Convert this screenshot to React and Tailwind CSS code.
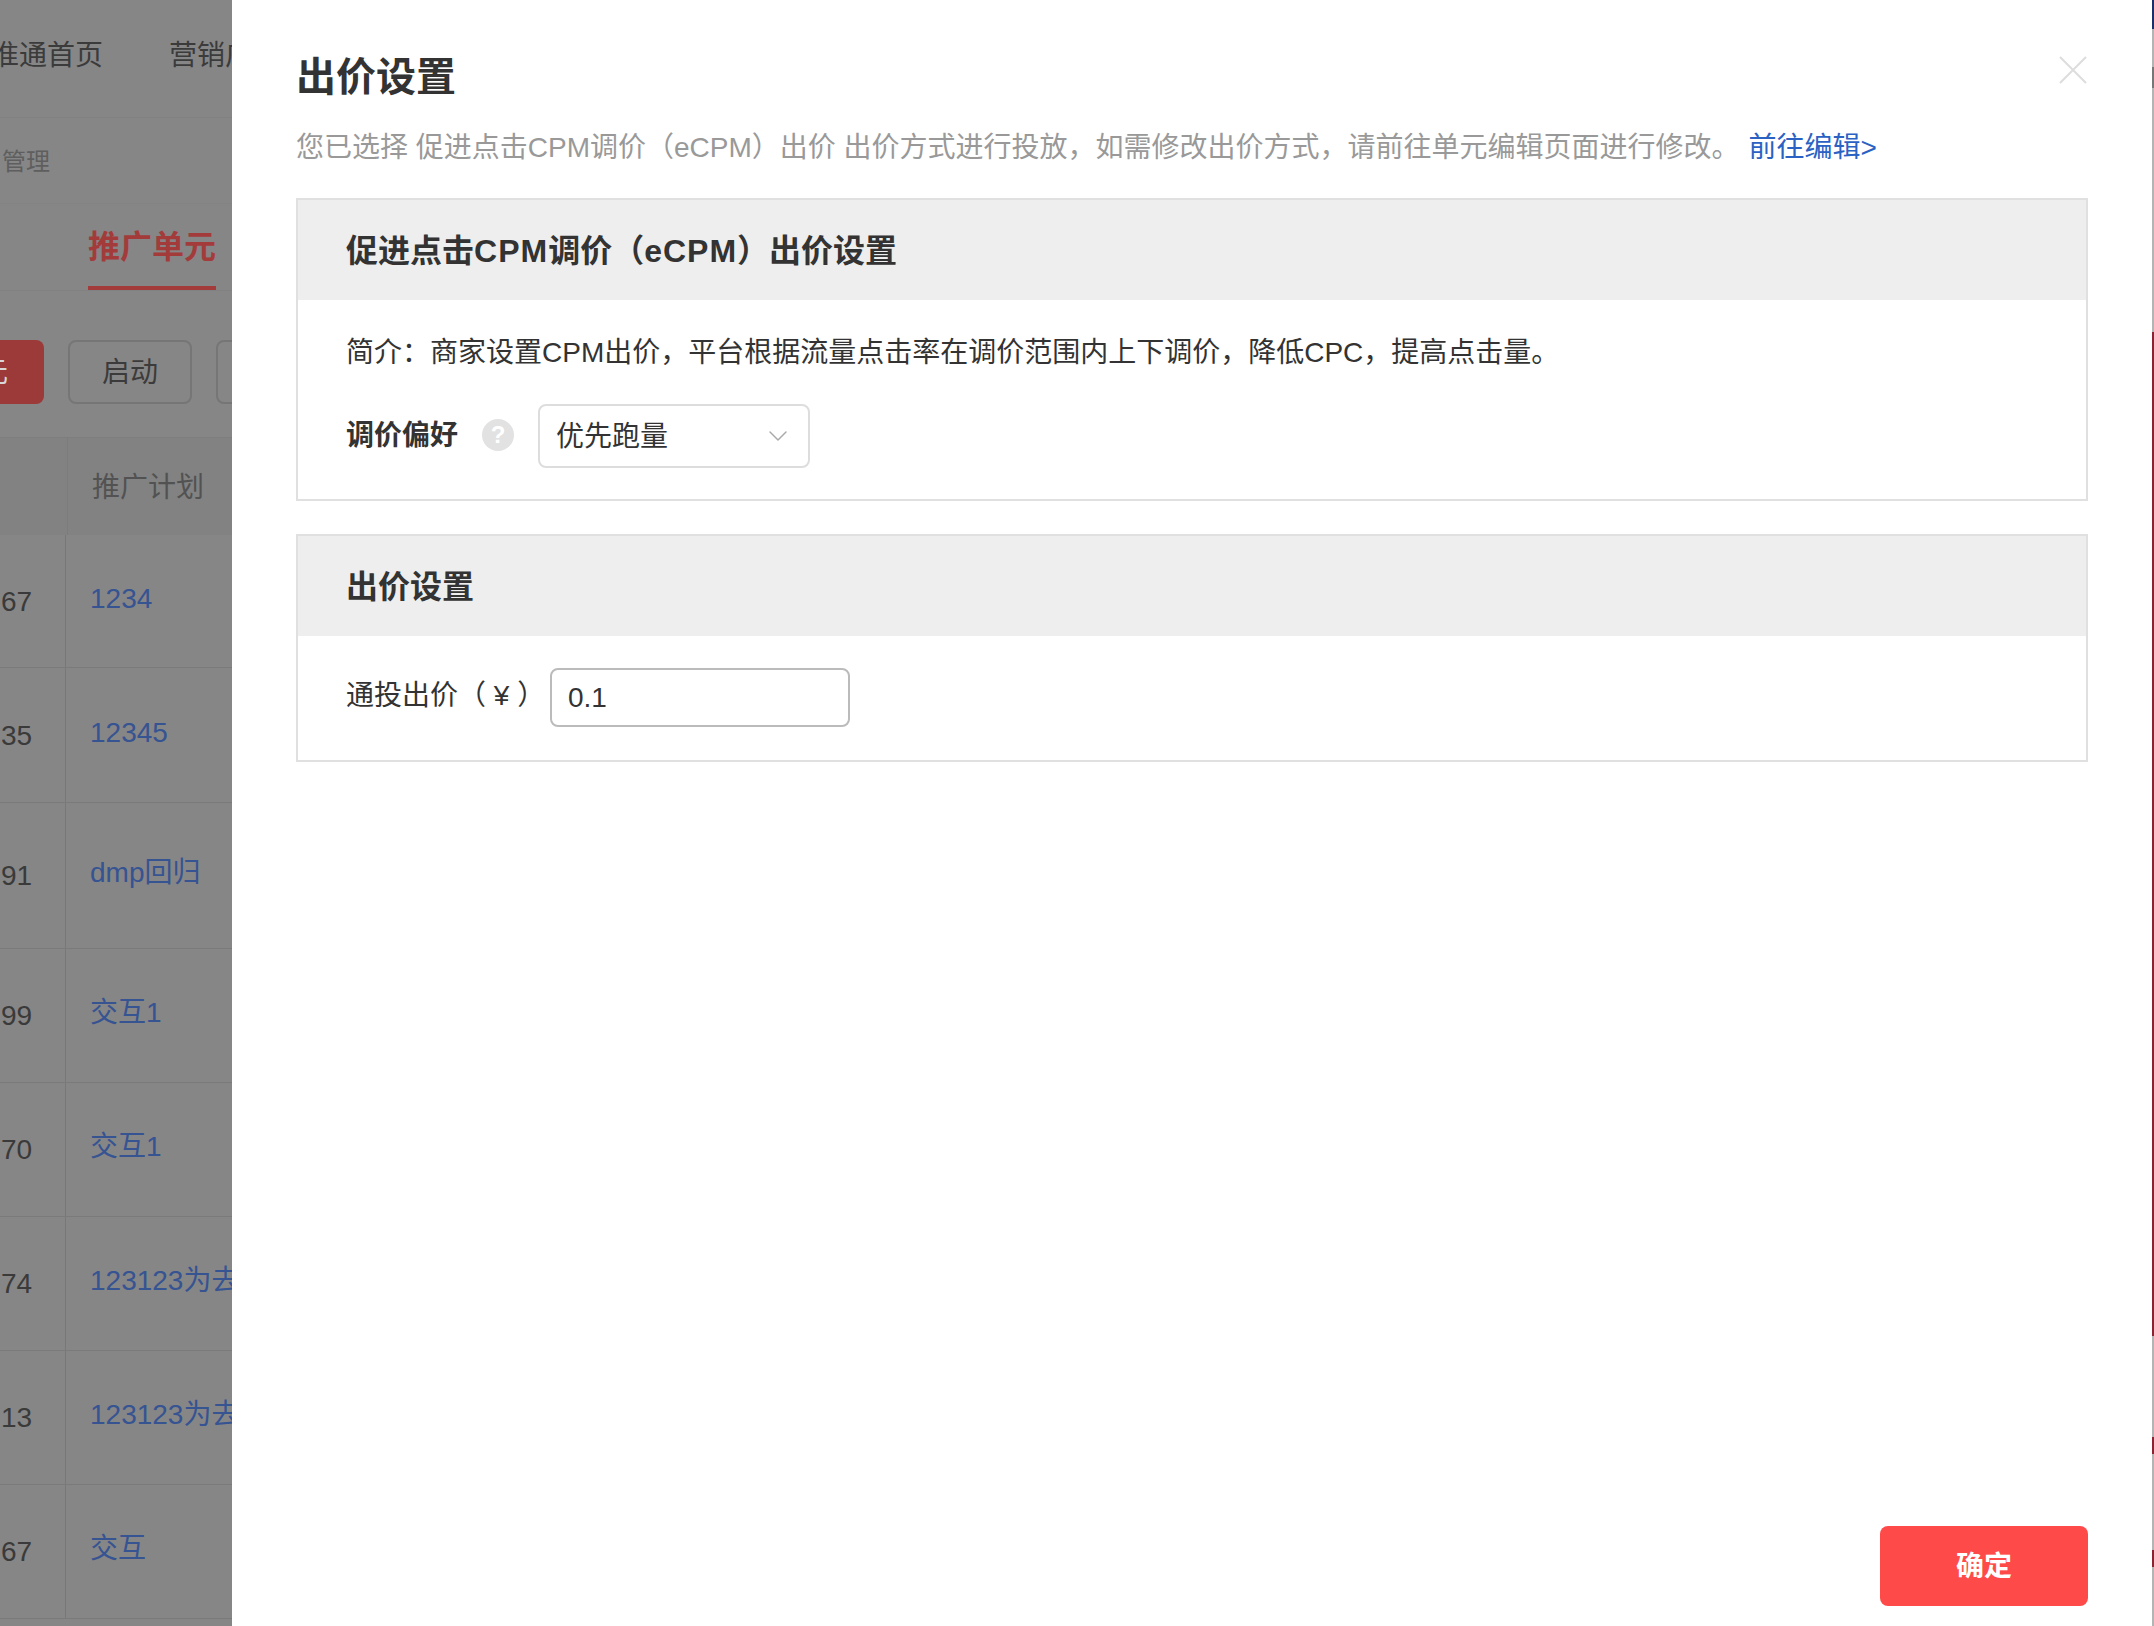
import { ChevronDown } from 'lucide-react';

const rows = [
    { id: '67', name: '1234', h: 'h-[133px]' },
    { id: '35', name: '12345', h: 'h-[135px]' },
    { id: '91', name: 'dmp回归', h: 'h-[146px]' },
    { id: '99', name: '交互1', h: 'h-[134px]' },
    { id: '70', name: '交互1', h: 'h-[134px]' },
    { id: '74', name: '123123为去重', h: 'h-[134px]' },
    { id: '13', name: '123123为去重', h: 'h-[134px]' },
    { id: '67', name: '交互', h: 'h-[134px]' },
];

function BackgroundPage() {
    return (
        <div className="w-[232px] h-full shrink-0 overflow-hidden bg-[#868686] whitespace-nowrap">
            <div className="h-[118px] flex items-center -ml-[9px] pb-[5px] text-[28px] text-[#3b3b3b] border-b border-[#818181]">
                <span>准通首页</span>
                <span className="ml-[66px]">营销广告</span>
            </div>
            <div className="h-[86px] flex items-center pl-[2px] pt-[2px] text-[24px] text-[#5e5e5e] border-b border-[#838383]">管理</div>
            <div className="h-[87px] pl-[88px] border-b border-[#818181]">
                <div className="w-[128px] h-[86px] pt-[19px] text-center text-[32px] leading-[48px] font-bold text-[#a33b3b] border-b-[4px] border-[#a33b3b]">推广单元</div>
            </div>
            <div className="h-[146px] flex items-start pt-[49px] gap-[24px]">
                <div className="w-[44px] h-[64px] shrink-0 flex justify-end pr-[36px] rounded-r-[8px] bg-[#9c3a3a] text-[28px] leading-[66px] text-[#d8d8d8] overflow-hidden">元</div>
                <div className="w-[124px] h-[64px] shrink-0 rounded-[8px] border-2 border-[#767676] text-center text-[28px] leading-[62px] text-[#3b3b3b]">启动</div>
                <div className="w-[60px] h-[64px] shrink-0 rounded-[8px] border-2 border-[#767676]"></div>
            </div>
            <div className="h-[98px] flex bg-[#828282] border-t border-[#7d7d7d]">
                <div className="w-[68px] h-full shrink-0 border-r border-[#7c7c7c]"></div>
                <div className="pl-[24px] pt-[30px] text-[28px] leading-[40px] text-[#525252]">推广计划</div>
            </div>
            {rows.map((row, i) => (
                <div key={i} className={`${row.h} flex border-b border-[#7a7a7a]`}>
                    <div className="w-[66px] shrink-0 flex items-center pl-[1px] pt-[1px] text-[28px] text-[#3a3a3a] border-r border-[#787878]">{row.id}</div>
                    <div className="flex items-center pl-[24px] pb-[5px] text-[28px] text-[#365392]">{row.name}</div>
                </div>
            ))}
        </div>
    );
}

function SectionBox({ title, children }) {
    return (
        <div className="border-2 border-[#e0e0e0]">
            <div className="h-[100px] flex items-center pl-[48px] pt-[2px] bg-[#eeeeee] text-[32px] font-bold text-[#333333]">
                <span>{title}</span>
            </div>
            {children}
        </div>
    );
}

function Drawer() {
    return (
        <div className="flex-1 h-full flex flex-col bg-white pl-[64px] pr-[64px] pt-[49px] pb-[20px]">
            <div className="flex items-center justify-between h-[56px]">
                <h2 className="text-[40px] leading-[56px] font-semibold text-[#333333]">出价设置</h2>
                <svg width="28" height="28" viewBox="0 0 28 28" className="mb-[14px] mr-[1px]" stroke="#dddddd" strokeWidth="2" fill="none">
                    <path d="M1 1L27 27M27 1L1 27" />
                </svg>
            </div>
            <p className="mt-[23px] text-[28px] leading-[40px] text-[#999999] whitespace-nowrap">
                您已选择 促进点击CPM调价（eCPM）出价 出价方式进行投放，如需修改出价方式，请前往单元编辑页面进行修改。
                <a className="ml-[9px] text-[#2a62c4]">前往编辑&gt;</a>
            </p>

            <div className="mt-[30px]">
                <SectionBox title={<>促进点击<span className="tracking-[1px]">CPM</span>调价（<span className="tracking-[1px]">eCPM</span>）出价设置</>}>
                    <div className="pl-[48px] pt-[33px] pb-[31px]">
                        <p className="text-[28px] leading-[40px] text-[#333333]">简介：商家设置CPM出价，平台根据流量点击率在调价范围内上下调价，降低CPC，提高点击量。</p>
                        <div className="mt-[31px] flex items-center">
                            <span className="w-[112px] text-[28px] font-bold text-[#333333]">调价偏好</span>
                            <span className="ml-[24px] mb-[2px] w-[32px] h-[32px] rounded-full bg-[#e2e2e2] text-white text-[24px] font-bold leading-[32px] text-center">?</span>
                            <div className="ml-[24px] w-[272px] h-[64px] flex items-center justify-between pl-[16px] pr-[14px] border-2 border-[#dddddd] rounded-[8px] text-[28px] text-[#333333]">
                                <span className="pt-[1px]">优先跑量</span>
                                <ChevronDown size={32} strokeWidth={1.1} color="#aaaaaa" />
                            </div>
                        </div>
                    </div>
                </SectionBox>
            </div>

            <div className="mt-[33px]">
                <SectionBox title="出价设置">
                    <div className="pl-[48px] pt-[32px] pb-[33px] flex items-center">
                        <span className="w-[204px] text-[28px] text-[#333333] pb-[3px]">通投出价（ ¥ ）</span>
                        <input
                            defaultValue="0.1"
                            className="w-[300px] h-[59px] px-[16px] pt-[1px] border-2 border-[#bbbbbb] rounded-[8px] text-[28px] text-[#333333] outline-none"
                        />
                    </div>
                </SectionBox>
            </div>

            <button className="mt-auto self-end w-[208px] h-[80px] pt-[2px] rounded-[8px] bg-[#ff4a4a] text-white text-[28px] font-semibold">确定</button>
        </div>
    );
}

function EdgeStrip() {
    return (
        <div className="w-[2px] h-full shrink-0 flex flex-col bg-[#b4b4b4]">
            <div className="h-[29px] bg-[#1c2f6b]"></div>
            <div className="h-[38px]"></div>
            <div className="h-[21px] bg-[#777777]"></div>
            <div className="h-[244px]"></div>
            <div className="h-[1004px] bg-[#8b2332]"></div>
            <div className="h-[101px]"></div>
            <div className="h-[17px] bg-[#8b2332]"></div>
            <div className="h-[96px]"></div>
            <div className="h-[17px] bg-[#8b2332]"></div>
        </div>
    );
}

export default function App() {
    return (
        <div className="w-[2154px] h-[1626px] flex overflow-hidden bg-white font-['Liberation_Sans','Noto_Sans_CJK_SC',sans-serif]">
            <BackgroundPage />
            <Drawer />
            <EdgeStrip />
        </div>
    );
}
